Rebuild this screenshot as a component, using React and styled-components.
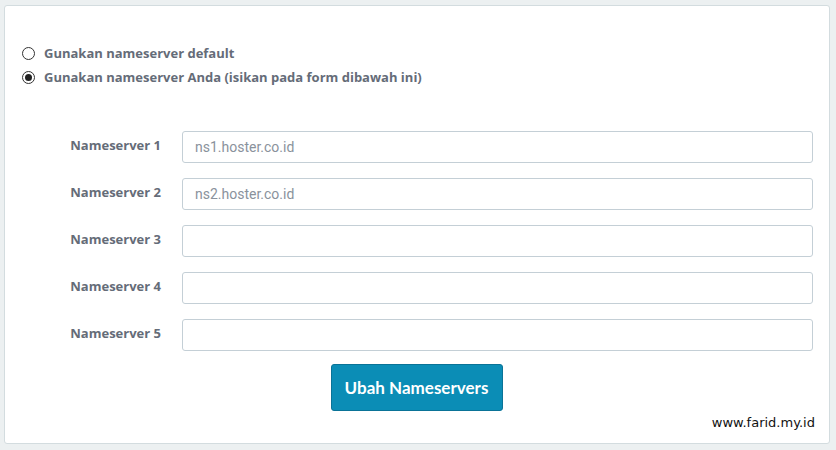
import React from "react";
import styled, { createGlobalStyle } from "styled-components";

const Global = createGlobalStyle`
  html, body { margin: 0; padding: 0; background: #ecf0f1; }
  body { font-family: "Open Sans", sans-serif; }
  * { box-sizing: border-box; }
`;

const Page = styled.div`
  padding: 5px 6px 6px 4px;
  width: 836px;
  height: 450px;
`;

const Panel = styled.div`
  background: #fff;
  border: 1px solid #d3dcdf;
  border-radius: 3px;
  height: 439px;
  padding: 35px 16px 0 17px;
  display: flex;
  flex-direction: column;
`;

const RadioRow = styled.label`
  display: flex;
  align-items: center;
  gap: 9px;
  height: 24px;
  font-size: 13px;
  font-weight: 700;
  color: #656c78;
`;

const Circle = styled.span`
  width: 13px;
  height: 13px;
  border-radius: 50%;
  border: 1px solid #333;
  display: flex;
  align-items: center;
  justify-content: center;
  background: #fff;
  &::after {
    content: "";
    width: 7px;
    height: 7px;
    border-radius: 50%;
    background: ${(p) => (p.$checked ? "#222" : "transparent")};
  }
`;

const Form = styled.div`
  margin-top: 42px;
  display: flex;
  flex-direction: column;
  gap: 15px;
`;

const Row = styled.div`
  display: grid;
  grid-template-columns: 139px 1fr;
  column-gap: 21px;
  align-items: center;
`;

const Label = styled.div`
  text-align: right;
  font-size: 13px;
  font-weight: 700;
  color: #656c78;
  padding-bottom: 4px;
`;

const Input = styled.input`
  height: 32px;
  width: 100%;
  border: 1px solid #c4cfd6;
  border-radius: 3px;
  padding: 0 12px;
  font-family: "Roboto", "Liberation Sans", sans-serif;
  font-size: 14px;
  color: #555;
  &::placeholder { color: #8a929c; }
`;

const ButtonWrap = styled.div`
  display: flex;
  justify-content: center;
  margin-top: 13px;
  padding-right: 2px;
`;

const Button = styled.button`
  width: 172px;
  height: 47px;
  background: #0b8db6;
  border: 1px solid #0a7397;
  border-radius: 3px;
  color: #fff;
  font-family: "Lato", sans-serif;
  font-weight: 700;
  font-size: 17px;
`;

const Credit = styled.div`
  align-self: flex-end;
  margin-top: 4px;
  margin-right: -2px;
  font-family: "DejaVu Sans", sans-serif;
  font-size: 13px;
  color: #111;
`;

const servers = ["ns1.hoster.co.id", "ns2.hoster.co.id", "", "", ""];

export default function App() {
  return (
    <>
      <Global />
      <Page>
        <Panel>
          <RadioRow>
            <Circle />
            Gunakan nameserver default
          </RadioRow>
          <RadioRow>
            <Circle $checked />
            Gunakan nameserver Anda (isikan pada form dibawah ini)
          </RadioRow>
          <Form>
            {servers.map((s, i) => (
              <Row key={i}>
                <Label>Nameserver {i + 1}</Label>
                <Input placeholder={s} />
              </Row>
            ))}
          </Form>
          <ButtonWrap>
            <Button>Ubah Nameservers</Button>
          </ButtonWrap>
          <Credit>www.farid.my.id</Credit>
        </Panel>
      </Page>
    </>
  );
}
